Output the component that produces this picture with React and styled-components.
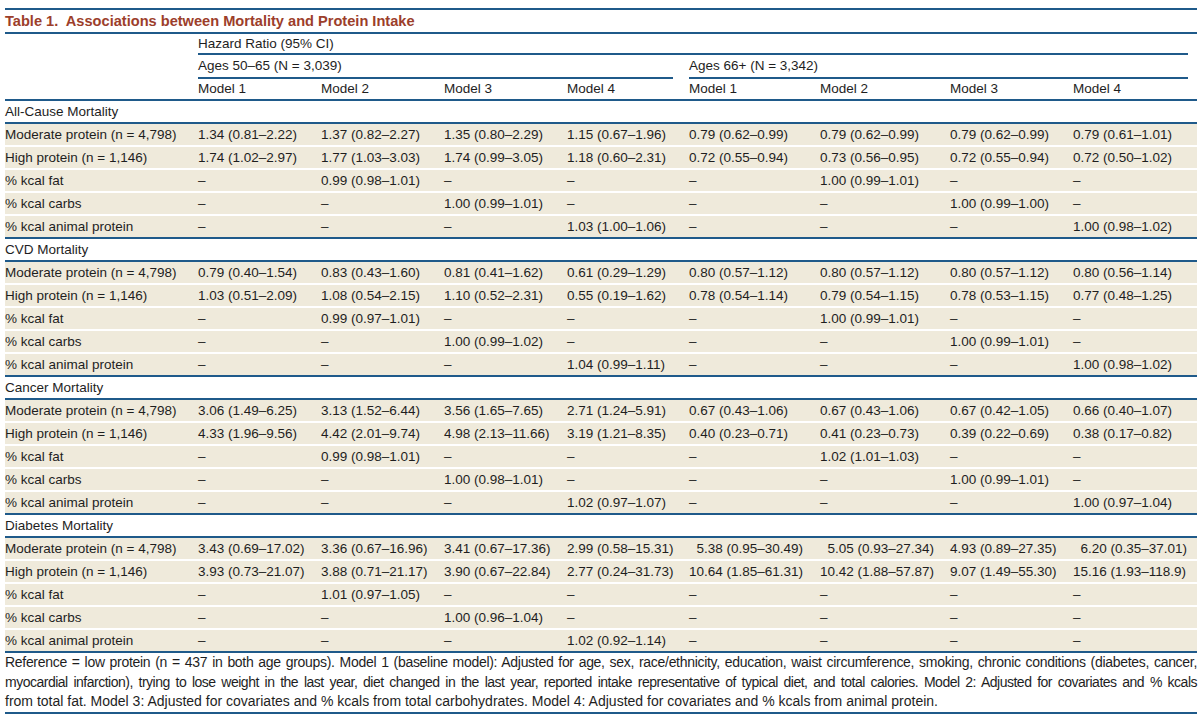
import styled, { createGlobalStyle } from "styled-components";

const GlobalStyle = createGlobalStyle`
  html, body {
    margin: 0;
    padding: 0;
    background: #ffffff;
  }
  body {
    font-family: "Liberation Sans", Arial, sans-serif;
    color: #1e1e1e;
  }
`;

const BLUE = "#1f5a8a";
const BEIGE = "#efeadb";
const COLS = "193px 123px 123px 123px 122px 131px 130px 123px 1fr";

const sections = [
  {
    name: "All-Cause Mortality",
    rows: [
      ["Moderate protein (n = 4,798)", "1.34 (0.81–2.22)", "1.37 (0.82–2.27)", "1.35 (0.80–2.29)", "1.15 (0.67–1.96)", "0.79 (0.62–0.99)", "0.79 (0.62–0.99)", "0.79 (0.62–0.99)", "0.79 (0.61–1.01)"],
      ["High protein (n = 1,146)", "1.74 (1.02–2.97)", "1.77 (1.03–3.03)", "1.74 (0.99–3.05)", "1.18 (0.60–2.31)", "0.72 (0.55–0.94)", "0.73 (0.56–0.95)", "0.72 (0.55–0.94)", "0.72 (0.50–1.02)"],
      ["% kcal fat", "–", "0.99 (0.98–1.01)", "–", "–", "–", "1.00 (0.99–1.01)", "–", "–"],
      ["% kcal carbs", "–", "–", "1.00 (0.99–1.01)", "–", "–", "–", "1.00 (0.99–1.00)", "–"],
      ["% kcal animal protein", "–", "–", "–", "1.03 (1.00–1.06)", "–", "–", "–", "1.00 (0.98–1.02)"],
    ],
  },
  {
    name: "CVD Mortality",
    rows: [
      ["Moderate protein (n = 4,798)", "0.79 (0.40–1.54)", "0.83 (0.43–1.60)", "0.81 (0.41–1.62)", "0.61 (0.29–1.29)", "0.80 (0.57–1.12)", "0.80 (0.57–1.12)", "0.80 (0.57–1.12)", "0.80 (0.56–1.14)"],
      ["High protein (n = 1,146)", "1.03 (0.51–2.09)", "1.08 (0.54–2.15)", "1.10 (0.52–2.31)", "0.55 (0.19–1.62)", "0.78 (0.54–1.14)", "0.79 (0.54–1.15)", "0.78 (0.53–1.15)", "0.77 (0.48–1.25)"],
      ["% kcal fat", "–", "0.99 (0.97–1.01)", "–", "–", "–", "1.00 (0.99–1.01)", "–", "–"],
      ["% kcal carbs", "–", "–", "1.00 (0.99–1.02)", "–", "–", "–", "1.00 (0.99–1.01)", "–"],
      ["% kcal animal protein", "–", "–", "–", "1.04 (0.99–1.11)", "–", "–", "–", "1.00 (0.98–1.02)"],
    ],
  },
  {
    name: "Cancer Mortality",
    rows: [
      ["Moderate protein (n = 4,798)", "3.06 (1.49–6.25)", "3.13 (1.52–6.44)", "3.56 (1.65–7.65)", "2.71 (1.24–5.91)", "0.67 (0.43–1.06)", "0.67 (0.43–1.06)", "0.67 (0.42–1.05)", "0.66 (0.40–1.07)"],
      ["High protein (n = 1,146)", "4.33 (1.96–9.56)", "4.42 (2.01–9.74)", "4.98 (2.13–11.66)", "3.19 (1.21–8.35)", "0.40 (0.23–0.71)", "0.41 (0.23–0.73)", "0.39 (0.22–0.69)", "0.38 (0.17–0.82)"],
      ["% kcal fat", "–", "0.99 (0.98–1.01)", "–", "–", "–", "1.02 (1.01–1.03)", "–", "–"],
      ["% kcal carbs", "–", "–", "1.00 (0.98–1.01)", "–", "–", "–", "1.00 (0.99–1.01)", "–"],
      ["% kcal animal protein", "–", "–", "–", "1.02 (0.97–1.07)", "–", "–", "–", "1.00 (0.97–1.04)"],
    ],
  },
  {
    name: "Diabetes Mortality",
    rows: [
      ["Moderate protein (n = 4,798)", "3.43 (0.69–17.02)", "3.36 (0.67–16.96)", "3.41 (0.67–17.36)", "2.99 (0.58–15.31)", "\u20075.38 (0.95–30.49)", "\u20075.05 (0.93–27.34)", "4.93 (0.89–27.35)", "\u20076.20 (0.35–37.01)"],
      ["High protein (n = 1,146)", "3.93 (0.73–21.07)", "3.88 (0.71–21.17)", "3.90 (0.67–22.84)", "2.77 (0.24–31.73)", "10.64 (1.85–61.31)", "10.42 (1.88–57.87)", "9.07 (1.49–55.30)", "15.16 (1.93–118.9)"],
      ["% kcal fat", "–", "1.01 (0.97–1.05)", "–", "–", "–", "–", "–", "–"],
      ["% kcal carbs", "–", "–", "1.00 (0.96–1.04)", "–", "–", "–", "–", "–"],
      ["% kcal animal protein", "–", "–", "–", "1.02 (0.92–1.14)", "–", "–", "–", "–"],
    ],
  },
];

const Sheet = styled.div`
  width: 1192px;
  margin-left: 5px;
  padding-top: 8px;
  font-size: 13.5px;
`;

const Rule = styled.div`
  height: 2px;
  background: ${BLUE};
`;

const Title = styled.h1`
  margin: 0;
  font-size: 14.6px;
  line-height: 22px;
  font-weight: bold;
  color: #9c3e2b;
  white-space: pre;
`;

const Row = styled.div`
  display: grid;
  grid-template-columns: ${COLS};
  line-height: ${({ $h }) => $h || 21}px;
  background: ${({ $tint }) => ($tint ? BEIGE : "transparent")};
  white-space: nowrap;
`;

const HeadCell = styled.div`
  grid-column: ${({ $from, $span }) => `${$from} / span ${$span}`};
  border-bottom: ${({ $rule }) => ($rule ? `2px solid ${BLUE}` : "none")};
  margin-right: ${({ $trim }) => $trim || 0}px;
`;

const Cell = styled.div`
  overflow: visible;
`;

const Body = styled.div`
  display: flex;
  flex-direction: column;
  gap: 2px;
`;

const Note = styled.div`
  font-size: 14px;
  line-height: 19.5px;
`;

const NoteLine = styled.div`
  text-align: justify;
  text-align-last: ${({ $last }) => ($last ? "left" : "justify")};
  letter-spacing: ${({ $ls }) => $ls || 0}px;
  word-spacing: ${({ $ws }) => $ws || 0}px;
`;

const models = ["Model 1", "Model 2", "Model 3", "Model 4"];

const Section = ({ name, rows }) => (
  <>
    <Row>
      <Cell>{name}</Cell>
    </Row>
    <Rule />
    <Body>
      {rows.map((r) => (
        <Row key={r[0]} $tint>
          {r.map((v, i) => (
            <Cell key={i}>{v}</Cell>
          ))}
        </Row>
      ))}
    </Body>
    <Rule />
  </>
);

export default function App() {
  return (
    <>
      <GlobalStyle />
      <Sheet>
        <Rule />
        <Title>{"Table 1.  Associations between Mortality and Protein Intake"}</Title>
        <Rule />
        <Row $h={19}>
          <HeadCell $from={2} $span={8} $rule $trim={9}>
            Hazard Ratio (95% CI)
          </HeadCell>
        </Row>
        <Row $h={22}>
          <HeadCell $from={2} $span={4} $rule $trim={16}>
            Ages 50–65 (N = 3,039)
          </HeadCell>
          <HeadCell $from={6} $span={4} $rule $trim={9}>
            Ages 66+ (N = 3,342)
          </HeadCell>
        </Row>
        <Row $h={20}>
          <Cell />
          {[...models, ...models].map((m, i) => (
            <Cell key={i}>{m}</Cell>
          ))}
        </Row>
        <Rule />
        {sections.map((s) => (
          <Section key={s.name} {...s} />
        ))}
        <Note>
          <NoteLine $ls={-0.3} $ws={-1}>
            Reference = low protein (n = 437 in both age groups). Model 1 (baseline model): Adjusted for age, sex, race/ethnicity, education, waist circumference, smoking, chronic conditions (diabetes, cancer,
          </NoteLine>
          <NoteLine $ls={-0.5} $ws={-1.2}>
            myocardial infarction), trying to lose weight in the last year, diet changed in the last year, reported intake representative of typical diet, and total calories. Model 2: Adjusted for covariates and % kcals
          </NoteLine>
          <NoteLine $last>
            from total fat. Model 3: Adjusted for covariates and % kcals from total carbohydrates. Model 4: Adjusted for covariates and % kcals from animal protein.
          </NoteLine>
        </Note>
        <Rule />
      </Sheet>
    </>
  );
}
